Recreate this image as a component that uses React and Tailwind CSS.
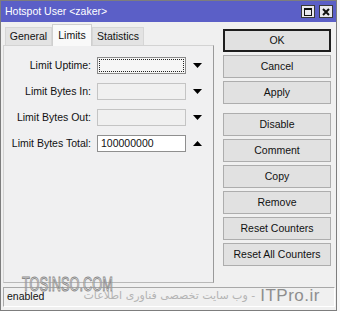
import React from "react";

const font = { fontFamily: '"Liberation Sans", Arial, sans-serif' };

function Arrow({ up }) {
  return (
    <svg width="9" height="5" viewBox="0 0 9 5" className="shrink-0">
      {up ? <polygon points="0,5 9,5 4.5,0" fill="#000" /> : <polygon points="0,0 9,0 4.5,5" fill="#000" />}
    </svg>
  );
}

function Row({ label, kind, value, up }) {
  let box = "h-[17px] w-[89px] border ";
  if (kind === "focus") box += "border-[#8a8a8a] bg-[#f6f6f6] p-[1px]";
  else if (kind === "disabled") box += "border-[#c4c4c4] bg-[#f0f0f0]";
  else box += "border-[#8f8f8f] bg-white";
  return (
    <div className="flex items-center h-[17px]">
      <div className="w-[88px] text-right text-[10.5px] text-[#111] pr-[1px] leading-none">{label}</div>
      <div className="w-[5px]" />
      <div className={box}>
        {kind === "focus" ? (
          <div className="w-full h-full border border-dotted border-[#222]" />
        ) : (
          <div className="text-[10.5px] leading-[15px] pl-[3px] text-[#111]">{value}</div>
        )}
      </div>
      <div className="w-[7px]" />
      <Arrow up={up} />
    </div>
  );
}

function Btn({ children, primary, className = "" }) {
  return (
    <div
      className={
        "h-[23px] w-[108px] flex items-center justify-center text-[10.5px] text-[#111] bg-[#e1e1e1] " +
        (primary ? "border-2 border-[#1e1e1e]" : "border border-[#adadad]") +
        " " +
        className
      }
    >
      {children}
    </div>
  );
}

export default function App() {
  return (
    <div className="w-[340px] h-[311px] bg-[#f7f7f7] overflow-hidden" style={font}>
      <div className="relative w-[337px] h-[311px] border border-[#7d7d7d] bg-[#f0f0f0] flex flex-col">
        {/* title bar */}
        <div className="h-[21px] bg-[#5b5fc7] flex items-center pl-[4px] pr-[3px]">
          <div className="text-white text-[10.5px] leading-none flex-1">Hotspot User &lt;zaker&gt;</div>
          <div className="flex gap-[4px] items-center">
            <div className="w-[14px] h-[13px] bg-[#e9e9ee] border border-[#3a3a3a] flex items-center justify-center">
              <div className="w-[8px] h-[8px] border border-[#111] border-t-2" />
            </div>
            <div className="w-[14px] h-[13px] bg-[#e9e9ee] border border-[#3a3a3a] flex items-center justify-center">
              <svg width="8" height="8" viewBox="0 0 8 8">
                <path d="M1 1 L7 7 M7 1 L1 7" stroke="#111" strokeWidth="2" />
              </svg>
            </div>
          </div>
        </div>

        {/* main */}
        <div className="flex pl-[2px]">
          <div className="w-[211px] flex flex-col">
            <div className="h-[23px] flex items-end pl-[2px]">
              <div className="h-[18px] w-[47px] bg-[#e3e3e3] border border-b-0 border-[#d6d6d6] text-[10.5px] flex items-center justify-center text-[#111]">
                General
              </div>
              <div className="h-[22px] w-[40px] bg-[#f9f9f9] border border-b-0 border-[#cfcfcf] text-[10.5px] flex items-start pt-[3px] justify-center text-[#111] relative z-10 -mb-[1px]">
                Limits
              </div>
              <div className="h-[18px] w-[52px] bg-[#e3e3e3] border border-b-0 border-[#d6d6d6] text-[10.5px] flex items-center justify-center text-[#111]">
                Statistics
              </div>
            </div>
            <div className="h-[238px] border border-[#d3d3d3] border-r-[#9a9a9a] border-b-[#b8b8b8] bg-[#f0f0f1] flex flex-col gap-[9px] pt-[11px]">
              <Row label="Limit Uptime:" kind="focus" />
              <Row label="Limit Bytes In:" kind="disabled" />
              <Row label="Limit Bytes Out:" kind="disabled" />
              <Row label="Limit Bytes Total:" kind="normal" value="100000000" up />
            </div>
          </div>
          <div className="ml-[9px] pt-[7px] flex flex-col gap-[3px]">
            <Btn primary>OK</Btn>
            <Btn>Cancel</Btn>
            <Btn>Apply</Btn>
            <Btn className="mt-[6px]">Disable</Btn>
            <Btn>Comment</Btn>
            <Btn>Copy</Btn>
            <Btn>Remove</Btn>
            <Btn>Reset Counters</Btn>
            <Btn>Reset All Counters</Btn>
          </div>
        </div>

        {/* status bar */}
        <div className="mt-[4px] ml-[2px] mr-[1px] h-[20px] border border-[#a8a8a8] border-r-white border-b-white flex items-center pl-[3px] text-[10.5px] text-[#111]">
          enabled
        </div>

        {/* watermarks */}
        <div className="absolute left-[21px] top-[273px] text-[20px] leading-none text-white/40 [-webkit-text-stroke:1px_#8a8a8a] origin-left scale-x-[0.64]">
          TOSINSO.COM
        </div>
        <div
          dir="rtl"
          className="absolute right-[16px] top-[286px] flex items-center gap-[5px] leading-none"
        >
          <span className="text-[17px] text-[#8e8e8e] tracking-[0.5px]">ITPro.ir</span>
          <span className="text-[11px] text-[#b4b4b4]" style={{ fontFamily: '"DejaVu Sans", sans-serif' }}>
            - وب سایت تخصصی فناوری اطلاعات
          </span>
        </div>
      </div>
    </div>
  );
}
